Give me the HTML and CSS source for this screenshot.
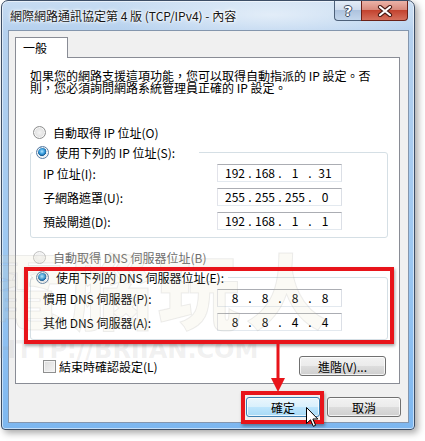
FILE: index.html
```html
<!DOCTYPE html>
<html lang="zh-Hant">
<head>
<meta charset="utf-8">
<title>TCP/IPv4 內容</title>
<link rel="stylesheet" href="styles.css">
</head>
<body>
<div class="window">
  <div class="titlebar">
    <span class="title">網際網路通訊協定第 4 版 (TCP/IPv4) - 內容</span>
    <div class="caption">
      <span class="cap help"><span class="q">?</span></span>
      <span class="cap close">
        <svg width="16" height="12" viewBox="0 0 16 12"><path d="M3 2 L13 10 M13 2 L3 10" stroke="#4a1a14" stroke-width="4.2" stroke-linecap="round"/><path d="M3 2 L13 10 M13 2 L3 10" stroke="#fff" stroke-width="2.2" stroke-linecap="round"/></svg>
      </span>
    </div>
  </div>
  <div class="client">
    <div class="tabs"><div class="tab">一般</div></div>
    <div class="panel">
      <p class="intro">如果您的網路支援這項功能，您可以取得自動指派的 IP 設定。否<br>則，您必須詢問網路系統管理員正確的 IP 設定。</p>
      <div class="radio-row first"><span class="radio"></span><span>自動取得 IP 位址(O)</span></div>
      <div class="group">
        <div class="radio-row legend wide"><span class="radio on"></span><span>使用下列的 IP 位址(S):</span></div>
        <div class="row"><span class="label">IP 位址(I):</span><div class="ip"><span>192</span><i>.</i><span>168</span><i>.</i><span>1</span><i>.</i><span>31</span></div></div>
        <div class="row"><span class="label">子網路遮罩(U):</span><div class="ip"><span>255</span><i>.</i><span>255</span><i>.</i><span>255</span><i>.</i><span>0</span></div></div>
        <div class="row"><span class="label">預設閘道(D):</span><div class="ip"><span>192</span><i>.</i><span>168</span><i>.</i><span>1</span><i>.</i><span>1</span></div></div>
      </div>
      <div class="radio-row disabled dns-auto"><span class="radio off"></span><span>自動取得 DNS 伺服器位址(B)</span></div>
      <div class="group dns">
        <div class="radio-row legend"><span class="radio on"></span><span>使用下列的 DNS 伺服器位址(E):</span></div>
        <div class="row"><span class="label">慣用 DNS 伺服器(P):</span><div class="ip"><span>8</span><i>.</i><span>8</span><i>.</i><span>8</span><i>.</i><span>8</span></div></div>
        <div class="row"><span class="label">其他 DNS 伺服器(A):</span><div class="ip"><span>8</span><i>.</i><span>8</span><i>.</i><span>4</span><i>.</i><span>4</span></div></div>
      </div>
      <div class="bottom-row">
        <label class="check"><span class="box"></span><span>結束時確認設定(L)</span></label>
        <span class="btn adv">進階(V)...</span>
      </div>
    </div>
    <div class="actions">
      <span class="btn primary">確定</span>
      <span class="btn">取消</span>
    </div>
  </div>
</div>

<div class="watermark">
  <span class="wm-cjk">電腦玩人</span>
  <span class="wm-url">HTTP://BRIIAN.COM</span>
</div>

<div class="mark mark-dns"></div>
<svg class="arrow" width="18" height="50" viewBox="0 0 18 50"><path d="M8 0 V37" stroke="#e8141a" stroke-width="3"/><path d="M1 35 H15 L8 49 Z" fill="#e8141a"/></svg>
<div class="mark mark-ok"></div>
<svg class="cursor" width="14" height="21" viewBox="0 0 14 21"><path d="M0.5 0.5 V16.5 L4.5 12.8 L7.3 19.3 L9.6 18.3 L6.9 12 H11.8 Z" fill="#fff" stroke="#000" stroke-width="1" stroke-linejoin="round"/></svg>
</body>
</html>
```

FILE: styles.css
```css
* { box-sizing: border-box; }

body {
  margin: 0;
  width: 425px;
  height: 441px;
  overflow: hidden;
  position: relative;
  background: #fff;
  font-family: "Noto Sans CJK TC", "Noto Sans", sans-serif;
  font-size: 12px;
  color: #000;
}

.window {
  margin-left: 1px;
  width: 414px;
  height: 430px;
  border: 1px solid #3d4e66;
  border-radius: 7px 7px 4px 4px;
  padding: 0 5px 6px 6px;
  display: flex;
  flex-direction: column;
  background:
    radial-gradient(ellipse 170px 30px at 270px 14px, rgba(255,255,255,.55), rgba(255,255,255,0)),
    linear-gradient(180deg, #c7dcf2 0, #b6d1ee 30px, #9cc7f1 60%, #7db7f0 100%);
  box-shadow: 3px 3px 7px rgba(0,0,0,.35), inset 0 0 0 1px rgba(255,255,255,.55);
}

.titlebar {
  height: 29px;
  display: flex;
  justify-content: space-between;
  align-items: flex-start;
  padding: 0 1px 0 2px;
}

.title {
  align-self: center;
  line-height: 16px;
  white-space: nowrap;
  color: #151515;
  text-shadow: 0 0 5px #fff, 0 0 3px #fff, 0 0 2px #fff;
}

.caption { display: flex; }

.cap {
  height: 20px;
  display: flex;
  align-items: center;
  justify-content: center;
  border: 1px solid #4d6079;
  border-top: none;
}

.help {
  width: 27px;
  border-right: none;
  border-radius: 0 0 0 4px;
  background: linear-gradient(180deg, #e3ecf7 0, #cfdcee 45%, #aec3de 50%, #c3d6ec 100%);
}

.q {
  font-family: "DejaVu Sans", sans-serif;
  font-weight: bold;
  font-size: 14px;
  line-height: 14px;
  color: #fff;
  text-shadow: -1px 0 #3c4c62, 1px 0 #3c4c62, 0 -1px #3c4c62, 0 1px #3c4c62;
}

.close {
  width: 47px;
  border-color: #6a2118;
  border-radius: 0 0 4px 0;
  background: linear-gradient(180deg, #ebb3a8 0, #d98c7e 45%, #c3432f 50%, #d5705d 100%);
}

.client {
  flex: 1;
  border: 1px solid #8496ad;
  background: #f0f0f0;
  padding: 6px 8px 0 6px;
}

.tabs { display: flex; }

.tab {
  position: relative;
  z-index: 1;
  width: 53px;
  height: 21px;
  margin-bottom: -1px;
  border: 1px solid #898c95;
  border-bottom: none;
  background: #fff;
  padding-left: 7px;
  line-height: 20px;
}

.panel {
  height: 327px;
  border: 1px solid #898c95;
  background: #fff;
  padding: 12px 11px 0 14px;
  display: flex;
  flex-direction: column;
}

.intro {
  margin: 0;
  line-height: 12px;
  white-space: nowrap;
}

.radio-row {
  display: flex;
  align-items: center;
  gap: 7px;
  height: 16px;
  padding-left: 3px;
  white-space: nowrap;
}

.radio-row.first { margin-top: 30px; }
.radio-row.dns-auto { margin-top: 11px; }
.radio-row.disabled { color: #6d6d6d; }

.radio {
  width: 13px;
  height: 13px;
  flex: none;
  border-radius: 50%;
  border: 1px solid #8e8f8f;
  background: radial-gradient(circle at 50% 50%, #f4f4f4 0, #e2e2e2 55%, #cfcfcf 100%);
  box-shadow: inset 0 0 0 1px #f8f8f8;
}

.radio.on {
  border-color: #5a7da3;
  background: radial-gradient(circle at 45% 40%, #b7e6ff 0, #3aa0e0 28%, #175c95 48%, #e6eef5 52%, #d7dee6 100%);
}

.radio.off {
  border-color: #c2c2c2;
  background: radial-gradient(circle, #f7f7f7 0, #ececec 100%);
}

.group {
  margin-top: 12px;
  border: 1px solid #d5dfe5;
  border-radius: 3px;
  padding-bottom: 7px;
  display: flex;
  flex-direction: column;
}

.group.dns { padding-bottom: 8px; }

.legend {
  align-self: flex-start;
  margin-top: -9px;
  margin-left: 2px;
  padding-right: 4px;
  background: #fff;
}

.legend.wide { padding-right: 24px; }

.row {
  display: flex;
  align-items: center;
  height: 18px;
  padding-left: 12px;
  margin-top: 6px;
}

.legend + .row { margin-top: 4px; }

.label {
  width: 174px;
  white-space: nowrap;
}

.ip {
  display: flex;
  align-items: center;
  width: 125px;
  height: 18px;
  padding-left: 5px;
  border: 1px solid;
  border-color: #abadb3 #dbdfe6 #e3e9ef #e2e3ea;
  background: #fff;
  line-height: 14px;
}

.ip span { width: 24px; text-align: center; }
.ip i { width: 6px; text-align: center; font-style: normal; }

.bottom-row {
  display: flex;
  justify-content: space-between;
  align-items: center;
  margin-top: 16px;
  padding-left: 13px;
  padding-right: 2px;
}

.check {
  display: flex;
  align-items: center;
  gap: 3px;
}

.box {
  width: 13px;
  height: 13px;
  border: 1px solid #8e8f8f;
  background: linear-gradient(135deg, #dcdcdc 0, #f4f4f4 100%);
  box-shadow: inset 0 0 0 1px #f4f4f4;
}

.btn {
  height: 20px;
  display: flex;
  align-items: center;
  justify-content: center;
  border: 1px solid #707070;
  border-radius: 3px;
  background: linear-gradient(180deg, #f2f2f2 0, #ebebeb 50%, #dddddd 50%, #cfcfcf 100%);
  box-shadow: inset 0 0 0 1px rgba(255,255,255,.75);
  white-space: nowrap;
}

.adv { width: 87px; }

.actions {
  display: flex;
  justify-content: flex-end;
  gap: 7px;
  margin-top: 13px;
  margin-right: -1px;
}

.actions .btn { width: 74px; }

.btn.primary {
  border-color: #3c7fb1;
  background: linear-gradient(180deg, #eaf6fd 0, #d9f0fc 50%, #bee6fd 50%, #a7d9f5 100%);
}

.watermark {
  position: absolute;
  left: 0;
  top: 0;
  width: 425px;
  height: 441px;
  pointer-events: none;
}

.wm-cjk {
  position: absolute;
  left: -18px;
  top: 238px;
  font-size: 82px;
  line-height: 100px;
  font-weight: 900;
  letter-spacing: 6px;
  color: rgba(225, 210, 170, .12);
  -webkit-text-stroke: 1px rgba(160, 160, 160, .18);
  white-space: nowrap;
}

.wm-url {
  position: absolute;
  left: -4px;
  top: 336px;
  font-family: "DejaVu Sans", sans-serif;
  font-size: 24px;
  font-weight: bold;
  color: rgba(150, 150, 150, .14);
  white-space: nowrap;
}

.mark {
  position: absolute;
  border: 4px solid #e8141a;
  box-shadow: 1px 2px 3px rgba(0,0,0,.35);
}

.mark-dns { left: 24px; top: 267px; width: 370px; height: 77px; }
.mark-ok { left: 241px; top: 391px; width: 83px; height: 33px; }

.arrow { position: absolute; left: 270px; top: 343px; }
.cursor { position: absolute; left: 306px; top: 407px; }
```
